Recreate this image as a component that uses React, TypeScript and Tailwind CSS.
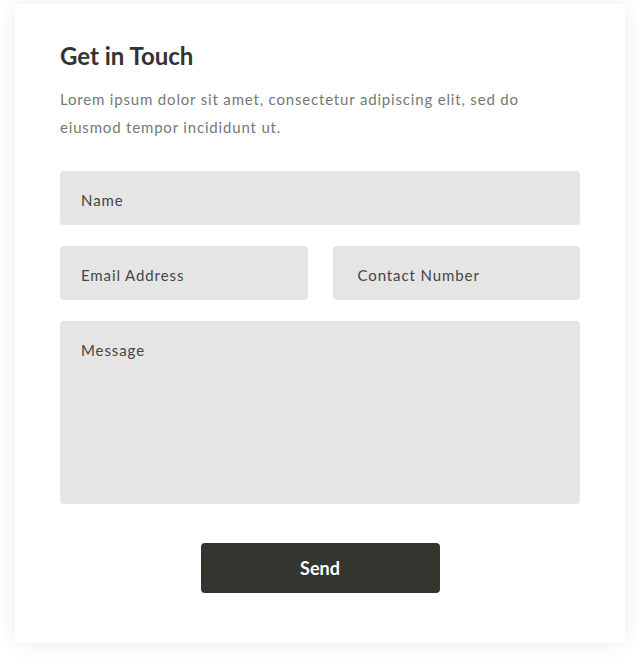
import { useState } from 'react'

export default function App() {
  const [form, setForm] = useState({ name: '', email: '', phone: '', message: '' })

  const field =
    'h-[54px] w-full rounded-[4px] bg-[#e5e5e5] pt-[4px] text-[15px] tracking-[0.06em] text-[#333] placeholder:text-[#444] outline-none'

  return (
    <div className="min-h-[668px] bg-white px-[15px] pt-[4px] font-['Lato','Open_Sans',sans-serif]">
      <div className="rounded-[4px] bg-white px-[45px] pt-[37px] pb-[50px] shadow-[0_0_22px_rgba(20,50,50,0.09)]">
        <h1 className="text-[24px] leading-[30px] font-bold text-[#333]">Get in Touch</h1>
        <p className="mt-[14px] max-w-[475px] text-[15px] leading-[28px] tracking-[0.055em] text-[#777]">
          Lorem ipsum dolor sit amet, consectetur adipiscing elit, sed do eiusmod tempor incididunt ut.
        </p>

        {/* Form */}
        <form className="mt-[30px] flex flex-col gap-[21px]" onSubmit={(e) => e.preventDefault()}>
          <input
            className={`${field} pl-[21px]`}
            placeholder="Name"
            value={form.name}
            onChange={(e) => setForm({ ...form, name: e.target.value })}
          />
          <div className="grid grid-cols-2 gap-[25px]">
            <input
              className={`${field} pl-[21px]`}
              placeholder="Email Address"
              value={form.email}
              onChange={(e) => setForm({ ...form, email: e.target.value })}
            />
            <input
              className={`${field} pl-[25px]`}
              placeholder="Contact Number"
              value={form.phone}
              onChange={(e) => setForm({ ...form, phone: e.target.value })}
            />
          </div>
          <textarea
            className="h-[183px] w-full resize-none rounded-[4px] bg-[#e5e5e5] px-[21px] pt-[19px] text-[15px] leading-[20px] tracking-[0.06em] text-[#333] placeholder:text-[#444] outline-none"
            placeholder="Message"
            value={form.message}
            onChange={(e) => setForm({ ...form, message: e.target.value })}
          />
          <div className="mt-[18px] flex justify-center">
            <button
              type="submit"
              className="h-[50px] w-[239px] rounded-[4px] bg-[#353530] text-[18px] font-bold text-white"
            >
              Send
            </button>
          </div>
        </form>
      </div>
    </div>
  )
}
